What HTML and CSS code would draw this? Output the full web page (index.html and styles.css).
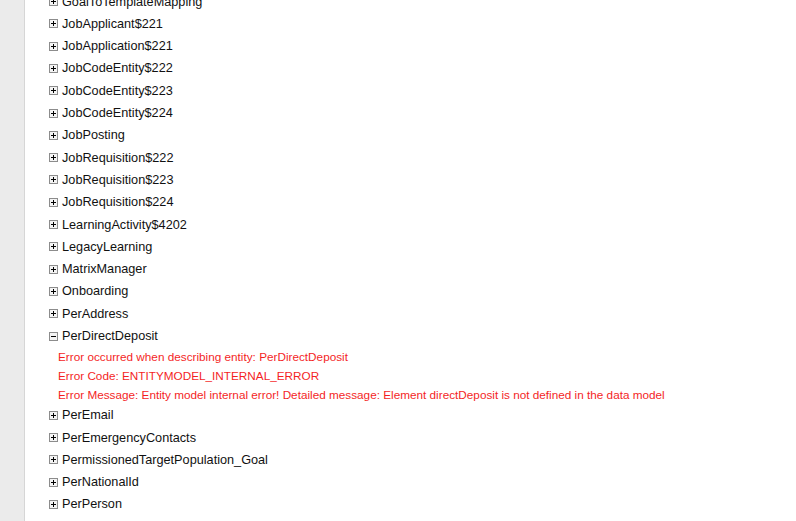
FILE: index.html
```html
<!DOCTYPE html>
<html>
<head>
<meta charset="utf-8">
<link rel="stylesheet" href="styles.css">
</head>
<body>
<div class="page">
  <aside class="side"></aside>
  <main class="content">
    <ul class="tree">
      <li class="node"><span class="box plus"></span><span class="label">GoalToTemplateMapping</span></li>
      <li class="node"><span class="box plus"></span><span class="label">JobApplicant$221</span></li>
      <li class="node"><span class="box plus"></span><span class="label">JobApplication$221</span></li>
      <li class="node"><span class="box plus"></span><span class="label">JobCodeEntity$222</span></li>
      <li class="node"><span class="box plus"></span><span class="label">JobCodeEntity$223</span></li>
      <li class="node"><span class="box plus"></span><span class="label">JobCodeEntity$224</span></li>
      <li class="node"><span class="box plus"></span><span class="label">JobPosting</span></li>
      <li class="node"><span class="box plus"></span><span class="label">JobRequisition$222</span></li>
      <li class="node"><span class="box plus"></span><span class="label">JobRequisition$223</span></li>
      <li class="node"><span class="box plus"></span><span class="label">JobRequisition$224</span></li>
      <li class="node"><span class="box plus"></span><span class="label">LearningActivity$4202</span></li>
      <li class="node"><span class="box plus"></span><span class="label">LegacyLearning</span></li>
      <li class="node"><span class="box plus"></span><span class="label">MatrixManager</span></li>
      <li class="node"><span class="box plus"></span><span class="label">Onboarding</span></li>
      <li class="node"><span class="box plus"></span><span class="label">PerAddress</span></li>
      <li class="node"><span class="box minus"></span><span class="label">PerDirectDeposit</span></li>
      <li class="errors">
        <div>Error occurred when describing entity: PerDirectDeposit</div>
        <div>Error Code: ENTITYMODEL_INTERNAL_ERROR</div>
        <div>Error Message: Entity model internal error! Detailed message: Element directDeposit is not defined in the data model</div>
      </li>
      <li class="node"><span class="box plus"></span><span class="label">PerEmail</span></li>
      <li class="node"><span class="box plus"></span><span class="label">PerEmergencyContacts</span></li>
      <li class="node"><span class="box plus"></span><span class="label">PermissionedTargetPopulation_Goal</span></li>
      <li class="node"><span class="box plus"></span><span class="label">PerNationalId</span></li>
      <li class="node"><span class="box plus"></span><span class="label">PerPerson</span></li>
    </ul>
  </main>
</div>
</body>
</html>
```

FILE: styles.css
```css
html, body {
  margin: 0;
  padding: 0;
  background: #ffffff;
  height: 100%;
  overflow: hidden;
}
.page {
  display: flex;
  height: 521px;
  font-family: "Liberation Sans", Arial, sans-serif;
  font-size: 12px;
  color: #000;
}
.side {
  width: 24px;
  flex: none;
  background: #ebebeb;
  border-right: 1px solid #d6d6d6;
}
.content {
  flex: 1;
  overflow: hidden;
}
.tree {
  list-style: none;
  margin: -9.6px 0 0 0;
  padding: 0 0 0 24px;
}
.node {
  height: 22.3px;
  display: flex;
  align-items: center;
}
.box {
  width: 7px;
  height: 7px;
  border: 1px solid #8c8c8c;
  background: #f4f4f4;
  position: relative;
  margin-right: 4px;
  flex: none;
}
.box::before {
  content: "";
  position: absolute;
  left: 1px;
  top: 3px;
  width: 5px;
  height: 1px;
  background: #000;
}
.box.plus::after {
  content: "";
  position: absolute;
  left: 3px;
  top: 1px;
  width: 1px;
  height: 5px;
  background: #000;
}
.label {
  font-size: 12.7px;
  line-height: 14px;
  color: #111;
}
.errors {
  color: #f41f1f;
  font-size: 11.75px;
  line-height: 19px;
  padding-left: 9px;
}
```
